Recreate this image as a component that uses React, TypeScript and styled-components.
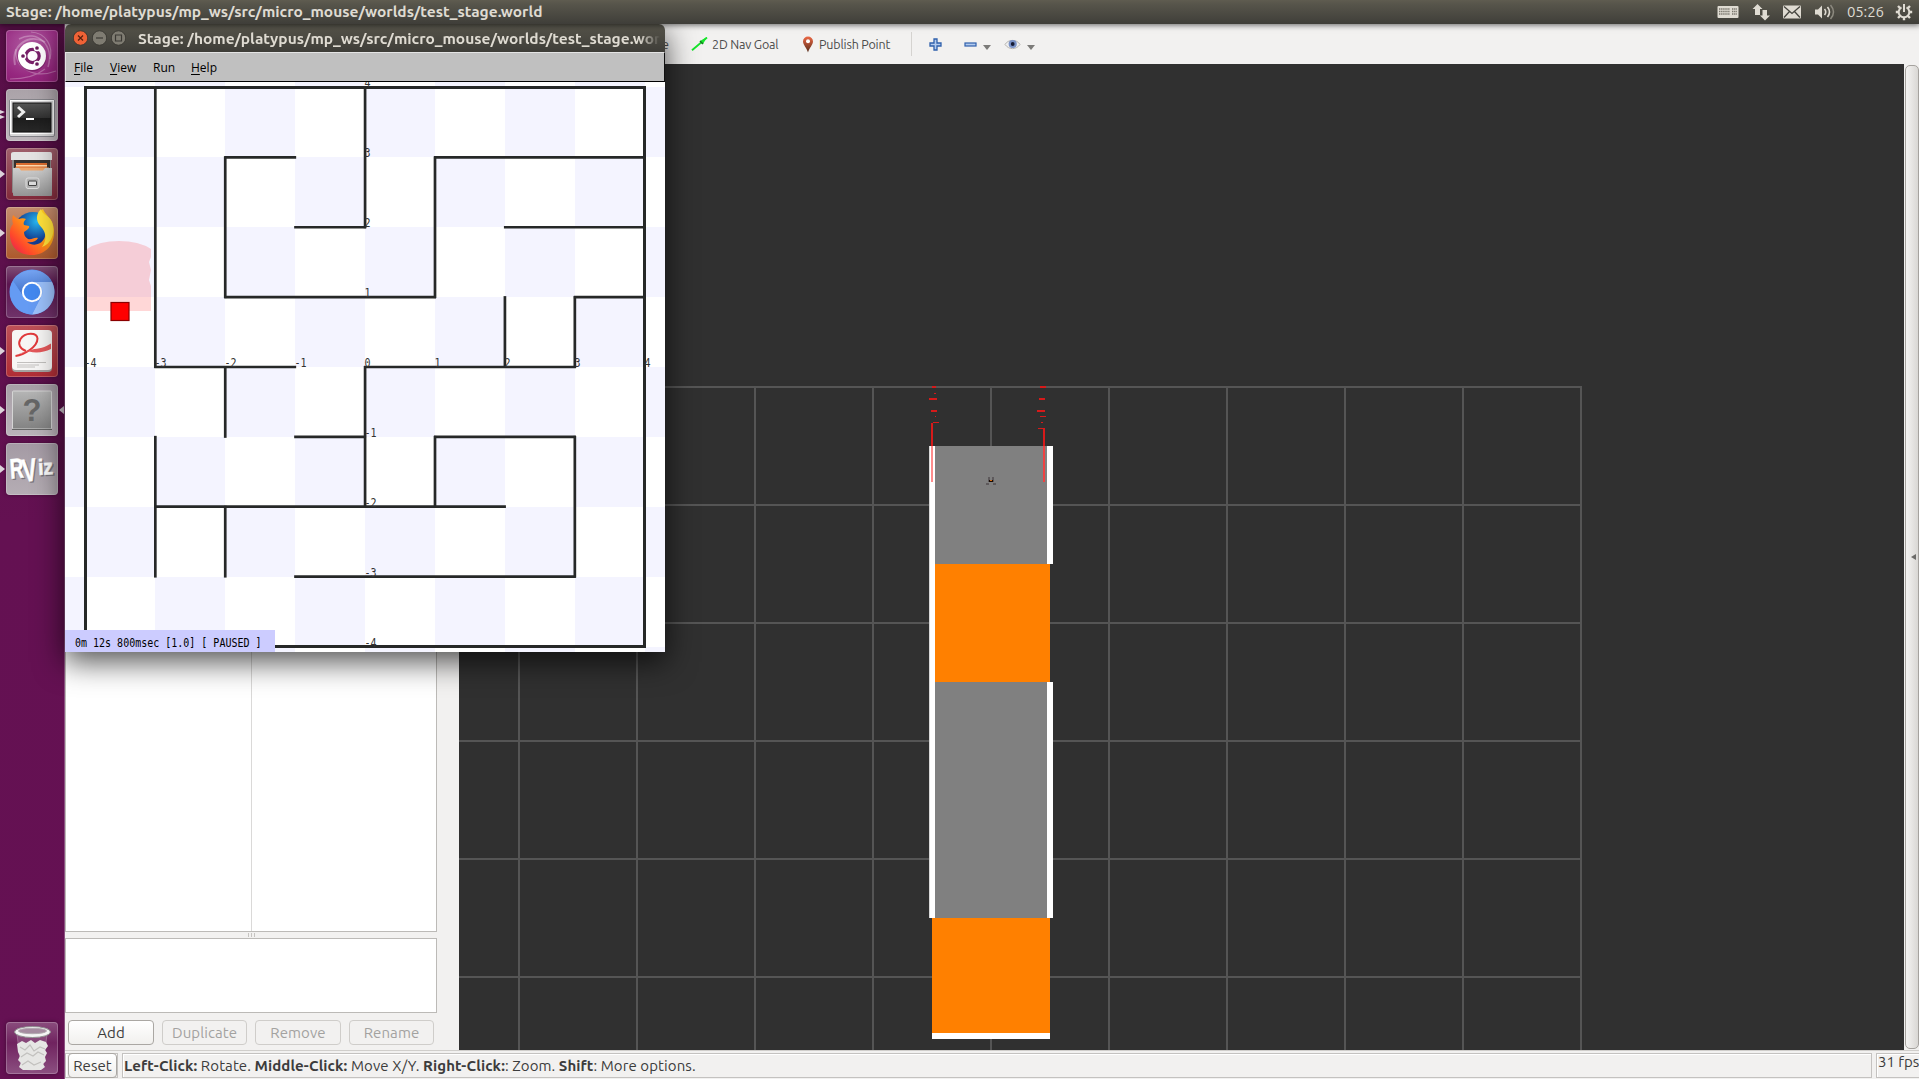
import React from "react";
import styled, { createGlobalStyle, css } from "styled-components";

const Global = createGlobalStyle`
  * { box-sizing: border-box; }
  html, body { margin: 0; padding: 0; overflow: hidden; }
  body { font-family: Ubuntu, "Open Sans", "Noto Sans", sans-serif; color: #3c3c3c; }
  svg { display: block; flex: none; }
`;

const Desktop = styled.div`
  position: relative;
  width: 1919px;
  height: 1079px;
  overflow: hidden;
  display: flex;
  flex-direction: column;
  background: #f2f1f0;
`;

const TopPanel = styled.header`
  position: relative;
  z-index: 2;
  height: 24px;
  flex: none;
  display: flex;
  align-items: center;
  justify-content: space-between;
  padding: 0 6px;
  background: linear-gradient(#5f5c50 0, #57554b 4px, #3f3e39 24px);
  box-shadow: 0 0 6px 1px rgba(0, 0, 0, 0.6);
`;

const BoldTitle = styled.span`
  font-size: 15.5px;
  line-height: 20px;
  font-weight: 700;
  white-space: nowrap;
  color: #dfdbd2;
`;

const Indicators = styled.div`
  display: flex;
  align-items: center;
  color: #dfdbd2;
`;

const Clock = styled.span`
  width: 36px;
  margin: 0 12px 0 12px;
  font-size: 15px;
  line-height: 20px;
  letter-spacing: -0.15px;
  white-space: nowrap;
`;

const Body = styled.div`
  display: flex;
  flex: 1;
  min-height: 0;
`;

const Launcher = styled.nav`
  width: 65px;
  flex: none;
  display: flex;
  flex-direction: column;
  gap: 7px;
  padding: 6px 0 5px 6px;
  background: linear-gradient(#570f47, #641152 500px, #651153);
  border-right: 1px solid #8b5180;
`;

const Tile = styled.div<{ $bg: string; $last?: boolean }>`
  position: relative;
  width: 52px;
  height: 52px;
  flex: none;
  display: flex;
  align-items: center;
  justify-content: center;
  border-radius: 4px;
  background: ${(p) => p.$bg};
  box-shadow: inset 0 0 0 1px rgba(255, 255, 255, 0.22), 0 0 4px rgba(0, 0, 0, 0.35);
  ${(p) => p.$last && css`margin-top: auto;`}
`;

const Running = styled.i<{ $right?: boolean; $top?: number; $half?: number }>`
  position: absolute;
  top: ${(p) => p.$top ?? 22}px;
  border: ${(p) => p.$half ?? 4}px solid transparent;
  ${(p) =>
    p.$right
      ? css`right: -6px; border-left: 0; border-right: 5px solid #dcd3da;`
      : css`left: -6px; border-right: 0; border-left: 5px solid #dcd3da;`}
`;

const Rviz = styled.main`
  flex: 1;
  min-width: 0;
  display: flex;
  flex-direction: column;
`;

const Toolbar = styled.div`
  height: 40px;
  flex: none;
  display: flex;
  align-items: center;
  padding: 0 0 0 597px;
  background: #f2f1f0;
  color: #4c4c4c;
`;

const Tool = styled.span<{ $width: number; $gap: number }>`
  width: ${(p) => p.$width}px;
  margin-right: ${(p) => p.$gap}px;
  font-size: 12.5px;
  letter-spacing: -0.17px;
  line-height: 18px;
  white-space: nowrap;
`;

const Divider = styled.i`
  width: 1px;
  height: 24px;
  margin-right: 17px;
  background: #d5d3d0;
`;

const Caret = styled.i<{ $gap: number }>`
  border: 4px solid transparent;
  border-top: 5px solid #7c7b79;
  border-bottom: 0;
  margin: 7px ${(p) => p.$gap}px 0 6px;
`;

const Work = styled.div`
  flex: 1;
  min-height: 0;
  display: flex;
`;

const Side = styled.section`
  width: 394px;
  flex: none;
  display: flex;
  flex-direction: column;
  padding: 0 22px 5px 0;
`;

const Tree = styled.div`
  flex: 1;
  display: grid;
  grid-template-columns: 186px 1fr;
  background: #fff;
  border: 1px solid #bcbab7;
`;

const TreeColumn = styled.div`
  &:first-child { border-right: 1px solid #dad9d8; }
`;

const Handle = styled.div`
  height: 6px;
  display: flex;
  gap: 2px;
  align-items: center;
  justify-content: center;
  i { width: 1px; height: 4px; background: #c6c4c1; }
`;

const Description = styled.div`
  height: 75px;
  background: #fff;
  border: 1px solid #bcbab7;
`;

const Buttons = styled.div`
  display: grid;
  grid-template-columns: 86px 85px 86px 85px;
  gap: 8px;
  padding: 7px 0 0 3px;
`;

const Button = styled.button<{ $disabled?: boolean; $w?: number }>`
  width: ${(p) => (p.$w ? p.$w + "px" : "auto")};
  height: 25px;
  padding: 0;
  font: 15px/22px Ubuntu, "Open Sans", sans-serif;
  letter-spacing: 0.08px;
  border-radius: 4px;
  border: 1px solid ${(p) => (p.$disabled ? "#cfcdca" : "#aaa7a3")};
  background: ${(p) => (p.$disabled ? "#f2f1f0" : "linear-gradient(#ffffff, #f1f0ee)")};
  color: ${(p) => (p.$disabled ? "#a3a2a0" : "#3c3c3c")};
`;

const View = styled.section`
  width: 1445px;
  flex: none;
  background: #303030;
`;

const ScrollStrip = styled.div`
  flex: 1;
  display: flex;
  align-items: center;
  justify-content: center;
  padding-left: 2px;
  margin: 1px 0 1px 1px;
  border: 1px solid #a5a29e;
  border-radius: 5px;
  background: linear-gradient(90deg, #f4f3f2, #d9d7d4);
`;

const ScrollArrow = styled.i`
  border: 3.5px solid transparent;
  border-left: 0;
  border-right: 5px solid #6c6b69;
`;

const StatusBar = styled.footer`
  height: 29px;
  flex: none;
  display: flex;
  gap: 4px;
  padding: 2px 0 1px 0;
  border-top: 1px solid #d0cecb;
`;

const StatusCell = styled.div<{ $w: number; $p: number; $raise?: boolean }>`
  width: ${(p) => p.$w}px;
  flex: none;
  display: flex;
  align-items: center;
  padding: 0 0 ${(p) => (p.$raise ? 7 : 0)}px ${(p) => p.$p}px;
  font-size: 15px;
  line-height: 18px;
  white-space: nowrap;
  border: 1px solid #c4c2c0;
  box-shadow: inset 1px 1px #fff;
`;

const Hint = styled.span<{ $spacing: number }>`
  white-space: pre;
  letter-spacing: ${(p) => p.$spacing}px;
`;

const StageWindow = styled.section`
  position: absolute;
  z-index: 1;
  left: 65px;
  top: 24px;
  width: 600px;
  height: 628px;
  display: flex;
  flex-direction: column;
  border-radius: 6px 6px 0 0;
  box-shadow: 0 9px 30px 1px rgba(0, 0, 0, 0.68);
`;

const WindowTitle = styled.div`
  height: 28px;
  flex: none;
  display: flex;
  align-items: center;
  gap: 4px;
  padding: 2px 5px 0 8px;
  border-radius: 6px 6px 0 0;
  background: linear-gradient(#57554b, #3e3d38);
`;

const TitleClip = styled.div`
  flex: 1;
  min-width: 0;
  margin-left: 8px;
  overflow: hidden;
  mask-image: linear-gradient(90deg, #000 96%, transparent 100%);
`;

const MenuBar = styled.div`
  height: 30px;
  flex: none;
  display: flex;
  align-items: center;
  padding: 2px 0 0 8px;
  border: 1px solid #e4e4e4;
  border-right-color: #111;
  border-bottom-color: #000;
  background: #c0c0c0;
  color: #000;
  font: 12px/16px "Open Sans", sans-serif;
`;

const Menu = styled.span<{ $w: number }>`
  width: ${(p) => p.$w}px;
  u { text-underline-offset: 2px; }
`;

const STAGE_PATH = "Stage: /home/platypus/mp_ws/src/micro_mouse/worlds/test_stage.world";

type Wall = [number, number, number];
const vertical: Wall[] = [
  [1, 0, 4], [1, 5, 7], [2, 1, 3], [2, 4, 5], [2, 6, 7], [4, 0, 2], [4, 4, 6],
  [5, 1, 3], [5, 5, 6], [6, 3, 4], [7, 3, 4], [7, 5, 7],
];
const horizontal: Wall[] = [
  [1, 2, 3], [1, 5, 8], [2, 3, 4], [2, 6, 8], [3, 2, 5], [3, 7, 8], [4, 1, 3],
  [4, 4, 7], [5, 3, 4], [5, 5, 7], [6, 1, 6], [7, 3, 7],
];
const cellX = (n: number) => 20.4 + n * 69.92;
const cellY = (n: number) => 5.5 + n * 69.87;

const Glyphs = styled.text`
  font: 10px "DejaVu Sans Mono", monospace;
  fill: ${(p) => p.color ?? "#333"};
  white-space: pre;
`;

function BitmapText({ x, y, children, dark }: { x: number; y: number; children: React.ReactNode; dark?: boolean }) {
  return (
    <Glyphs transform={`translate(${x} ${y}) scale(1 1.17)`} color={dark ? "#000" : "#333"}>
      {children}
    </Glyphs>
  );
}

function Maze() {
  const tiles: React.ReactNode[] = [];
  for (let r = -1; r <= 8; r++)
    for (let c = -1; c <= 8; c++)
      if ((r + c) % 2 === 0)
        tiles.push(<rect key={`${r}.${c}`} x={20 + c * 70} y={5 + r * 70} width="70" height="70" fill="#f4f4ff" />);
  return (
    <svg width="600" height="570" viewBox="0 0 600 570">
      <rect width="600" height="570" fill="#fff" />
      <g shapeRendering="crispEdges">{tiles}</g>
      <path d="M22 167 Q34 159 54 159 Q74 159 86 167 L86 175 L84 180 L86 188 L84 198 L86 204 V229 H22 V196 L21 190Z" fill="#ff0000" fillOpacity=".155" />
      <rect x="46" y="220.500" width="18" height="18" fill="#f00" stroke="#8b0000" strokeWidth="1.200" />
      <g stroke="#262828" strokeWidth="2.7" fill="none">
        {vertical.map(([x, a, b]) => (
          <path key={`v${x}.${a}`} d={`M${cellX(x)} ${cellY(a) - 1}V${cellY(b) + 1}`} />
        ))}
        {horizontal.map(([y, a, b]) => (
          <path key={`h${y}.${a}`} d={`M${cellX(a) - 1} ${cellY(y)}H${cellX(b) + 1}`} />
        ))}
        <rect x="20.5" y="5.5" width="559" height="559" strokeWidth="3" shapeRendering="crispEdges" />
      </g>
      {[-4, -3, -2, -1, 0, 1, 2, 3, 4].map((n) => (
        <BitmapText key={`x${n}`} x={299.5 + n * 70} y={285}>{n}</BitmapText>
      ))}
      {[-4, -3, -2, -1, 1, 2, 3, 4].map((n) => (
        <BitmapText key={`y${n}`} x={299.5} y={285 - n * 70}>{n}</BitmapText>
      ))}
      <rect x="0" y="548" width="210" height="22" fill="#ccccff" />
      <BitmapText x={10} y={565} dark>0m 12s 800msec [1.0] [ PAUSED ]</BitmapText>
    </svg>
  );
}

const WindowButton = ({ kind }: { kind: "close" | "min" | "max" }) => (
  <svg width="15" height="18" viewBox="0 0 15 18">
    <circle cx="7.5" cy="8" r="7.2" fill={kind === "close" ? "#ef6236" : "#7f7c72"} stroke="#35332e" strokeWidth=".8" />
    <path
      d={kind === "close" ? "M5 5.5l5 5m0-5l-5 5" : kind === "min" ? "M4 8h7" : "M4.5 5h6v6h-6z"}
      fill="none" stroke={kind === "close" ? "#57210f" : "#3b3934"} strokeWidth="1.2"
    />
  </svg>
);

const leftEchoes: Wall[] = [
  [932, 386, 4], [934, 393, 2], [929, 398, 8], [931, 410, 6], [935, 416, 1], [933, 422, 6],
];
const rightEchoes: Wall[] = [
  [1040, 386, 6], [1039, 398, 6], [1037, 410, 8], [1040, 416, 6], [1041, 422, 2], [1038, 428, 7],
];

function Scene() {
  return (
    <svg width="1445" height="986" viewBox="459 64 1445 986" shapeRendering="crispEdges">
      <g fill="#555">
        {[386, 504, 622, 740, 858, 976].map((y) => <rect key={y} x="459" y={y} width="1123" height="2" />)}
        {[518, 636, 754, 872, 990, 1108, 1226, 1344, 1462, 1580].map((x) => (
          <rect key={x} x={x} y="386" width="2" height="664" />
        ))}
      </g>
      <rect x="935" y="446" width="112" height="472" fill="#808080" />
      <rect x="929" y="446" width="6" height="472" fill="#fff" />
      <rect x="929" y="446" width="1" height="472" fill="#d8d8d8" />
      <rect x="1047" y="446" width="6" height="118" fill="#fff" />
      <rect x="1047" y="682" width="6" height="236" fill="#fff" />
      <rect x="935" y="564" width="115" height="118" fill="#ff8000" />
      <rect x="932" y="918" width="118" height="115" fill="#ff8000" />
      <rect x="932" y="1033" width="118" height="6" fill="#fff" />
      <g fill="#d61a1a">
        {[...leftEchoes, ...rightEchoes].map(([x, y, w]) => (
          <rect key={`${x}.${y}`} x={x} y={y} width={w} height={y === 386 || y === 398 || y === 410 ? 2 : 1} />
        ))}
        <rect x="931" y="423" width="2" height="23" />
        <rect x="1043" y="428" width="2" height="18" />
      </g>
      <rect x="931" y="446" width="2" height="36" fill="#ff8c8c" />
      <rect x="1043" y="446" width="2" height="36" fill="#ef4242" />
      <path d="M988 477h2v5h-2zm4 0h2v5h-2zM986 483h3v2h-3zm7 0h3v2h-3z" fill="#5e5a5c" />
      <path d="M989 480h4v2h-4z" fill="#1b0d05" />
      <rect x="990" y="480" width="2" height="1" fill="#d96d12" />
    </svg>
  );
}

const DashIcon = () => (
  <svg width="50" height="50" viewBox="0 0 50 50">
    <g fill="none" stroke="#fff" strokeOpacity=".28">
      <path d="M8 34C4 14 22 2 38 11" strokeWidth="2" />
      <path d="M12 8C30-2 48 14 41 36" strokeWidth="1.5" />
      <path d="M9 18C7 38 28 48 49 40M24 1C40 2 46 16 43 28M3 48C14 48 28 46 38 38" strokeWidth="1.2" />
    </g>
    <circle cx="25" cy="26" r="14.5" fill="#6a1259" opacity=".55" />
    <circle cx="25" cy="25" r="14" fill="#fff" />
    <circle cx="25.5" cy="25" r="6.7" fill="none" stroke="#781f68" strokeWidth="3.2" />
    <g stroke="#fff" strokeWidth="1.5" fill="#6b1a5c">
      <circle cx="16" cy="25" r="2.6" /><circle cx="30" cy="17" r="2.6" /><circle cx="30" cy="33" r="2.6" />
    </g>
  </svg>
);

const TerminalIcon = () => (
  <svg width="48" height="48" viewBox="0 0 48 48">
    <defs><linearGradient id="term" x2="0" y2="1"><stop stopColor="#555" /><stop offset=".5" stopColor="#333" /><stop offset=".52" stopColor="#1c1c1c" /><stop offset="1" stopColor="#282828" /></linearGradient></defs>
    <rect x="1.5" y="8.5" width="45" height="37" rx="1.5" fill="#d8d7d8" stroke="#85848a" />
    <rect x="2.5" y="9.5" width="43" height="33" fill="none" stroke="#fff" />
    <rect x="5" y="12" width="38" height="29" fill="url(#term)" stroke="#111" />
    <path d="M10 16l5.5 5-5.5 5" stroke="#eee" strokeWidth="3" fill="none" /><path d="M18 28h8" stroke="#fff" strokeWidth="2" />
  </svg>
);

const FilesIcon = () => (
  <svg width="48" height="48" viewBox="0 0 48 48">
    <defs><linearGradient id="cab" x2="0" y2="1"><stop stopColor="#cfcfcf" /><stop offset="1" stopColor="#949494" /></linearGradient></defs>
    <path d="M5 2h38v40q0 1-1 1H5q-1 0-1-1V2z" fill="#8d8888" />
    <path d="M6 2h36q2 0 2 2v6H3V4q0-2 3-2z" fill="#e4e3e3" />
    <rect x="6" y="10" width="36" height="11" fill="#37312f" />
    <path d="M8 13h31v7H8z" fill="#db6c2e" /><path d="M8 15h31v1.500H8z" fill="#ffd9ae" />
    <path d="M7 17.500h34V21H7z" fill="#f0a468" />
    <path d="M5 18h6l2 2.500h22l2-2.500h7v27q0 1-1 1H6q-1 0-1-1z" fill="url(#cab)" />
    <rect x="18" y="28" width="13" height="10.500" rx="2" fill="#b2b2b2" stroke="#dedede" />
    <rect x="20.500" y="31" width="8" height="4.500" rx=".5" fill="#ddd" stroke="#444" />
  </svg>
);

const FirefoxIcon = () => (
  <svg width="48" height="48" viewBox="0 0 48 48">
    <defs>
      <linearGradient id="fire" x1="1" x2="0" y2="1"><stop stopColor="#ffe226" /><stop offset=".45" stopColor="#ff9a16" /><stop offset=".75" stopColor="#ff4a2a" /><stop offset="1" stopColor="#e2115c" /></linearGradient>
      <radialGradient id="globe" cx=".6" cy=".25"><stop stopColor="#27b9f4" /><stop offset="1" stopColor="#123d91" /></radialGradient>
    </defs>
    <circle cx="25" cy="22" r="19" fill="url(#globe)" />
    <path d="M5 6c2 2 4 4 6 4 2-1 5-1 7 0-2 2-3 4-2 6l5 1c1 2-2 4-5 6 0 3 1 5 4 7 4 1 6-2 10-1-2 4-7 5-11 4 9 7 21-1 18-12 0-5-8-9-6-15 0-3 2-5 4-6 1 5 10 9 11 21 1 15-9 25-22 25C9 46 1 36 2 23c0-3 1-6 3-8-1-3-1-6 0-9z" fill="url(#fire)" />
    <path d="M33 0c-7 7-4 14 1 19 4 5 5 12 0 19 9-3 14-14 10-25C42 7 34 6 33 0z" fill="#ffe13a" />
  </svg>
);

const ChromiumIcon = () => (
  <svg width="46" height="46" viewBox="0 0 46 46">
    <defs><linearGradient id="ctop" x2="0" y2="1"><stop stopColor="#76a5f3" /><stop offset="1" stopColor="#3e6ec7" /></linearGradient></defs>
    <circle cx="23" cy="23" r="22.5" fill="#6299f2" />
    <path d="M4 12A22.5 22.5 0 0 1 43 13H23A10 10 0 0 0 14 27z" fill="url(#ctop)" />
    <path d="M43 13A22.5 22.5 0 0 1 23 45.5L32 28A10 10 0 0 0 23 13z" fill="#9bc0fa" />
    <path d="M4 12l10 15a10 10 0 0 0 18 1l-9 17.5A22.5 22.5 0 0 1 4 12z" fill="#659bf3" />
    <circle cx="23" cy="23" r="10.2" fill="#fff" /><circle cx="23" cy="23" r="8.2" fill="#4388ef" />
  </svg>
);

const PdfIcon = () => (
  <svg width="44" height="44" viewBox="0 0 44 44">
    <rect x="2" y="2" width="40" height="41" rx="4" fill="#a5a2a0" /><rect x="2" y="1" width="40" height="40" rx="4" fill="#f7f6f5" />
    <path d="M5.500 27C14 26 27.500 18 27.500 9.500C27 3 15 3 10.500 10C7.500 15 10 20 16 22" fill="none" stroke="#e0393b" strokeWidth="2" />
    <path d="M5 27.500C10 24 16 21.800 22 20.500C29 19.500 35 18.500 41 14.500V20C34 23.500 26 24.500 19 22.500C14 23 9 25 5 27.500z" fill="#e4585a" />
    <path d="M7 33.500h29M7 36h22M7 38h18" stroke="#c2c0be" />
  </svg>
);

const QuestionMark = styled.text`
  font: 600 31px/1 "Liberation Sans", sans-serif;
  fill: #666;
  text-anchor: middle;
`;

const UnknownIcon = () => (
  <svg width="42" height="42" viewBox="0 0 42 42">
    <defs><linearGradient id="unk" x2="0" y2="1"><stop stopColor="#b5b5b5" /><stop offset="1" stopColor="#838383" /></linearGradient></defs>
    <rect x="1.5" y="2" width="39" height="38" rx="1" fill="url(#unk)" stroke="#d5d5d5" /><path d="M1 40.5h40" stroke="#666" />
    <QuestionMark x="21" y="32">?</QuestionMark>
  </svg>
);

const RvizLetters = styled.text`
  font-family: "Liberation Sans", sans-serif;
  font-weight: 700;
`;

const RvizIcon = () => (
  <svg width="50" height="50" viewBox="0 0 50 50">
    {[["#77737a", 1.3], ["#fff", 0]].map(([fill, d]) => (
      <g key={fill} fill={fill as string} stroke={fill as string} strokeWidth=".6" transform={`translate(${d} ${d})`}>
        <RvizLetters transform="translate(3.5 34.500) rotate(-4) scale(.68 1)" fontSize="28">R</RvizLetters>
        <RvizLetters transform="translate(16.500 38) rotate(-7) scale(.68 1)" fontSize="32">V</RvizLetters>
        <RvizLetters transform="translate(31.500 31) rotate(-3) scale(.88 1)" fontSize="22">iz</RvizLetters>
      </g>
    ))}
  </svg>
);

const TrashIcon = () => (
  <svg width="48" height="48" viewBox="0 0 48 48">
    <path d="M9 10l4 34q11 4 22 0l4-34z" fill="#d8c4d4" fillOpacity=".2" stroke="#c8b5c5" strokeOpacity=".4" />
    <path d="M9 20l5-3 4 2 5-3 4 3 5-3 6 2 2 4-3 4 2 3-2 4 1 4-3 3 2 3-4 3H15l-4-3 2-4-3-3 2-4-2-4z" fill="#e6e6e4" />
    <path d="M12 23l5 3 5-5 4 6 6-4 5 2M13 33l6-4 6 3 5-4 6 3M14 41l6-4 6 4 7-3" fill="none" stroke="#c2c1be" strokeWidth="1.200" />
    <ellipse cx="24.5" cy="8" rx="18" ry="5.5" fill="#f4f4f4" stroke="#8f8f8f" />
    <ellipse cx="24.5" cy="7" rx="14" ry="2.700" fill="#a58ba0" stroke="#b2aab0" />
  </svg>
);

const PlusIcon = () => (
  <svg width="13" height="13" viewBox="0 0 13 13"><path d="M5 1h3v4h4v3H8v4H5V8H1V5h4z" fill="#b3cbee" stroke="#2f60ac" strokeWidth="1.3" /></svg>
);

const EyeIcon = () => (
  <svg width="17" height="12" viewBox="0 0 17 12">
    <path d="M1 6.5C4 1 13 1 16 6.5 12 12 5 12 1 6.5z" fill="#efefef" stroke="#b6b4b1" />
    <circle cx="8.7" cy="6" r="4.1" fill="#7890c5" /><circle cx="8.7" cy="6" r="1.9" fill="#151a33" />
  </svg>
);

const Gap = styled.i<{ $w: number }>`
  width: ${(p) => p.$w}px;
  flex: none;
`;

export default function App() {
  return (
    <Desktop>
      <Global />
      <TopPanel>
        <BoldTitle>{STAGE_PATH}</BoldTitle>
        <Indicators>
          <svg width="22" height="14" viewBox="0 0 22 14">
            <rect x=".5" y="1" width="21" height="12" rx="1" fill="#dfdbd2" />
            <path d="M2 4h11M2 6.5h11M2 9h11M15 4h5M15 6.5h5M15 9h5" stroke="#77746b" strokeWidth="1.5" strokeDasharray="1.4 .7" />
          </svg>
          <Gap $w={13} />
          <svg width="18" height="18" viewBox="0 0 18 18" fill="#dfdbd2"><path d="M5.500 1l5 5H8v6H3V6H.5zM13 17.500l-5-5h2.500V7h4.500v5.500H18z" /></svg>
          <Gap $w={13} />
          <svg width="18" height="14" viewBox="0 0 18 14">
            <rect y=".5" width="18" height="13" rx="1" fill="#dfdbd2" />
            <path d="M1 1.500l8 7 8-7M1 12.500l5.500-6M17 12.500l-5.500-6" fill="none" stroke="#45443e" strokeWidth="1.300" />
          </svg>
          <Gap $w={14} />
          <svg width="20" height="16" viewBox="0 0 20 16">
            <path d="M0 5.500h3l4-4v13l-4-4H0z" fill="#dfdbd2" />
            <path d="M9.500 5q2.500 3 0 6M12.500 3q4 5 0 10" fill="none" stroke="#dfdbd2" strokeWidth="1.600" />
            <path d="M15.500 1q6 7 0 14" fill="none" stroke="#8c897f" strokeWidth="1.500" />
          </svg>
          <Clock>05:26</Clock>
          <svg width="18" height="18" viewBox="0 0 18 18" fill="none" stroke="#dfdbd2">
            <path d="M6.500 4.300a5.300 5.300 0 1 0 5 0" strokeWidth="2" /><path d="M9 1v8" strokeWidth="2" />
            <path d="M.8 9h3M14.200 9h3M3 3l2 2M15 3l-2 2M3 15l2-2M15 15l-2-2M9 14v3.300" strokeWidth="2.400" />
          </svg>
        </Indicators>
      </TopPanel>
      <Body>
        <Launcher>
          <Tile $bg="radial-gradient(circle at 45% 30%, #b05da2, #96277f 70%, #8c1e73)"><DashIcon /></Tile>
          <Tile $bg="linear-gradient(#aaa2a8, #beb7bc)"><TerminalIcon /><Running $top={21} $half={2.5} /><Running $top={26} $half={2.5} /></Tile>
          <Tile $bg="linear-gradient(#9f606c, #82293a)"><FilesIcon /><Running /></Tile>
          <Tile $bg="linear-gradient(#c48d6e, #ad592c)"><FirefoxIcon /><Running /></Tile>
          <Tile $bg="linear-gradient(#805078, #5c1650 35%, #70336a)"><ChromiumIcon /></Tile>
          <Tile $bg="linear-gradient(#bd5158, #b02d35)"><PdfIcon /><Running /></Tile>
          <Tile $bg="linear-gradient(#a89fa7, #bbb3ba)"><UnknownIcon /><Running /><Running $right /></Tile>
          <Tile $bg="linear-gradient(#a49aa4, #b5adb4)"><RvizIcon /><Running /></Tile>
          <Tile $last $bg="linear-gradient(#8a4d7d, #70235f 40%, #8c5081)"><TrashIcon /></Tile>
        </Launcher>
        <Rviz>
          <Toolbar>
            <Tool $width={7} $gap={22}>e</Tool>
            <svg width="17" height="14" viewBox="0 0 17 14"><path d="M1 13L10 5 9 4l7-4-4 7-2-1-8 7z" fill="#16e42b" /><path d="M1 13.300L16 .5" stroke="#16e42b" strokeWidth="1.800" /><path d="M9 4l3 3" stroke="#157a21" strokeWidth="1.500" /></svg>
            <Gap $w={4} />
            <Tool $width={67} $gap={23}>2D Nav Goal</Tool>
            <svg width="12" height="17" viewBox="0 0 12 17">
              <defs><linearGradient id="pin" x2="0" y2="1"><stop stopColor="#ee6845" /><stop offset="1" stopColor="#542c19" /></linearGradient></defs>
              <path d="M6 16.500C5 12 1 9 1 5.500a5 5 0 0 1 10 0C11 9 7 12 6 16.500z" fill="url(#pin)" /><circle cx="6" cy="5.300" r="2" fill="#fff" />
            </svg>
            <Gap $w={5} />
            <Tool $width={72} $gap={20}>Publish Point</Tool>
            <Divider />
            <PlusIcon />
            <Gap $w={22} />
            <svg width="13" height="5" viewBox="0 0 13 5"><rect x="1" y="1" width="11" height="3" fill="#b3cbee" stroke="#2f60ac" strokeWidth="1.200" /></svg>
            <Caret $gap={13} />
            <EyeIcon />
            <Caret $gap={0} />
          </Toolbar>
          <Work>
            <Side>
              <Tree><TreeColumn /><TreeColumn /></Tree>
              <Handle><i /><i /><i /></Handle>
              <Description />
              <Buttons>
                <Button>Add</Button>
                <Button $disabled>Duplicate</Button>
                <Button $disabled>Remove</Button>
                <Button $disabled>Rename</Button>
              </Buttons>
            </Side>
            <View><Scene /></View>
            <ScrollStrip><ScrollArrow /></ScrollStrip>
          </Work>
          <StatusBar>
            <StatusCell $w={53} $p={2}><Button $w={49}>Reset</Button></StatusCell>
            <StatusCell $w={1750} $p={1}>
              <Hint $spacing={0.09}>
                <b>Left-Click:</b> Rotate. <b>Middle-Click:</b> Move X/Y. <b>Right-Click:</b>: Zoom. <b>Shift</b>: More options.
              </Hint>
            </StatusCell>
            <StatusCell $w={50} $p={1} $raise><Hint $spacing={0}>31 fps</Hint></StatusCell>
          </StatusBar>
        </Rviz>
      </Body>
      <StageWindow>
        <WindowTitle>
          <WindowButton kind="close" /><WindowButton kind="min" /><WindowButton kind="max" />
          <TitleClip><BoldTitle>{STAGE_PATH}</BoldTitle></TitleClip>
        </WindowTitle>
        <MenuBar>
          <Menu $w={36}><u>F</u>ile</Menu>
          <Menu $w={43}><u>V</u>iew</Menu>
          <Menu $w={38}>Run</Menu>
          <Menu $w={40}><u>H</u>elp</Menu>
        </MenuBar>
        <Maze />
      </StageWindow>
    </Desktop>
  );
}
